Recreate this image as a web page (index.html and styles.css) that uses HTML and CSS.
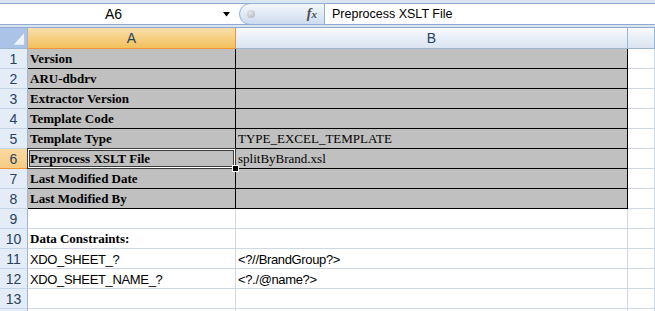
FILE: index.html
```html
<!DOCTYPE html>
<html lang="en">
<head>
  <meta charset="UTF-8">
  <meta name="viewport" content="width=device-width, initial-scale=1.0">
  <title>Template Sheet</title>

  <link rel="stylesheet" href="styles.css">
</head>
<body>
  <div class="formula-bar">
    <div class="formula-row">
      <div class="name-box">
        <span class="cell-ref">A6</span>
        <svg class="drop" width="8" height="5" viewBox="0 0 8 5"><path d="M0 0h7L3.5 4.5z" fill="#000"/></svg>
      </div>
      <div class="fx-pill">
        <span class="knob"></span>
        <span class="fx">f<sub>x</sub></span>
      </div>
      <div class="formula-input">Preprocess XSLT File</div>
    </div>
  </div>

  <div class="sheet">
    <!-- column headers -->
    <div class="corner">
      <svg width="28" height="21" viewBox="0 0 28 21"><path d="M14 17H25V5z" fill="#eef3fa"/></svg>
    </div>
    <div class="col-head active">A</div>
    <div class="col-head">B</div>
    <div class="col-head"></div>

    <!-- template header block -->
    <div class="row-head">1</div>
    <div class="cell boxed label">Version</div>
    <div class="cell boxed"></div>
    <div class="cell"></div>

    <div class="row-head">2</div>
    <div class="cell boxed label">ARU-dbdrv</div>
    <div class="cell boxed"></div>
    <div class="cell"></div>

    <div class="row-head">3</div>
    <div class="cell boxed label">Extractor Version</div>
    <div class="cell boxed"></div>
    <div class="cell"></div>

    <div class="row-head">4</div>
    <div class="cell boxed label">Template Code</div>
    <div class="cell boxed"></div>
    <div class="cell"></div>

    <div class="row-head">5</div>
    <div class="cell boxed label">Template Type</div>
    <div class="cell boxed value">TYPE_EXCEL_TEMPLATE</div>
    <div class="cell"></div>

    <div class="row-head active">6</div>
    <div class="cell boxed label current">
      Preprocess XSLT File
      <div class="selection"><span class="fill-handle"></span></div>
    </div>
    <div class="cell boxed value">splitByBrand.xsl</div>
    <div class="cell"></div>

    <div class="row-head">7</div>
    <div class="cell boxed label">Last Modified Date</div>
    <div class="cell boxed"></div>
    <div class="cell"></div>

    <div class="row-head">8</div>
    <div class="cell boxed label">Last Modified By</div>
    <div class="cell boxed"></div>
    <div class="cell"></div>

    <div class="row-head">9</div>
    <div class="cell"></div>
    <div class="cell"></div>
    <div class="cell"></div>

    <!-- constraints -->
    <div class="row-head">10</div>
    <div class="cell label">Data Constraints:</div>
    <div class="cell"></div>
    <div class="cell"></div>

    <div class="row-head">11</div>
    <div class="cell plain">XDO_SHEET_?</div>
    <div class="cell plain">&lt;?//BrandGroup?&gt;</div>
    <div class="cell"></div>

    <div class="row-head">12</div>
    <div class="cell plain">XDO_SHEET_NAME_?</div>
    <div class="cell plain">&lt;?./@name?&gt;</div>
    <div class="cell"></div>

    <div class="row-head">13</div>
    <div class="cell"></div>
    <div class="cell"></div>
    <div class="cell"></div>

    <div class="row-head">14</div>
    <div class="cell"></div>
    <div class="cell"></div>
    <div class="cell"></div>
  </div>
</body>
</html>
```

FILE: styles.css
```css
html,
body {
  height: 100%;
}

body {
  margin: 0;
  font-family: "Liberation Sans", Arial, sans-serif;
  background: #fff;
  overflow: hidden;
}

/* formula bar */
.formula-bar {
  height: 28px;
  box-sizing: border-box;
  padding: 3px 0 2px;
  background: #dbe5f2;
  border-bottom: 1px solid #8eaad0;
}

.formula-row {
  display: flex;
  height: 22px;
  box-sizing: border-box;
  background: #fff;
  border-top: 1px solid #8eaad0;
  border-bottom: 1px solid #8eaad0;
}

.name-box {
  width: 239px;
  display: flex;
  align-items: center;
}

.cell-ref {
  flex: 1;
  text-align: center;
  font-size: 14px;
  padding-left: 8px;
}

.drop {
  margin: 1px 8px 0 4px;
}

.fx-pill {
  width: 86px;
  box-sizing: border-box;
  margin: -1px 0;
  display: flex;
  align-items: center;
  justify-content: space-between;
  padding: 0 7px 0 7px;
  border: 1px solid #94afd4;
  border-radius: 11px 0 0 11px;
  background: linear-gradient(#f4f7fc, #dfe8f5 55%, #cddbee);
}

.knob {
  width: 8px;
  height: 8px;
  border-radius: 50%;
  background: radial-gradient(circle at 40% 35%, #e6e9ee, #a8adb5);
}

.fx {
  font-family: "Liberation Serif", serif;
  font-style: italic;
  font-weight: bold;
  font-size: 14px;
  color: #4a4d52;
}

.fx sub {
  font-size: 11px;
  vertical-align: 0;
}

.formula-input {
  flex: 1;
  padding-left: 7px;
  font-size: 12.5px;
  line-height: 20px;
  color: #000;
}

/* sheet grid */
.sheet {
  display: grid;
  grid-template-columns: 28px 208px 392px 1fr;
  grid-template-rows: 21px repeat(14, 20px);
}

.corner {
  background: #aac3e6;
  border-right: 1px solid #9eb6ce;
  border-bottom: 1px solid #9eb6ce;
  box-sizing: border-box;
  display: flex;
}

.col-head {
  box-sizing: border-box;
  border-right: 1px solid #9eb6ce;
  border-bottom: 1px solid #9eb6ce;
  background: linear-gradient(#f8fafd, #eaf0f8 45%, #dae4f1);
  color: #27415f;
  font-size: 14px;
  line-height: 21px;
  text-align: center;
}

.col-head.active {
  background: linear-gradient(#fae0ae, #f6cf82 50%, #f2c05e);
  border-right-color: #f29436;
  border-bottom-color: #f29436;
}

.row-head {
  box-sizing: border-box;
  background: #e4ecf7;
  border-right: 1px solid #9eb6ce;
  border-bottom: 1px solid #c5d3e6;
  color: #27415f;
  font-size: 14px;
  line-height: 21px;
  text-align: center;
}

.row-head.active {
  background: linear-gradient(#f9d9a0, #f6cc84);
  border-right-color: #f29436;
  border-bottom-color: #f29436;
}

.cell {
  box-sizing: border-box;
  border-right: 1px solid #d0d7e5;
  border-bottom: 1px solid #d0d7e5;
  padding: 0 2px;
  line-height: 20px;
  white-space: nowrap;
  overflow: hidden;
}

.cell.boxed {
  background: #c0c0c0;
  border-right-color: #000;
  border-bottom-color: #000;
}

.cell.current {
  position: relative;
  overflow: visible;
}

.label {
  font-family: "Liberation Serif", "Times New Roman", serif;
  font-weight: bold;
  font-size: 13px;
}

.value {
  font-family: "Liberation Serif", "Times New Roman", serif;
  font-size: 13px;
}

.plain {
  font-size: 13px;
  letter-spacing: -0.35px;
  line-height: 21px;
}

.selection {
  position: absolute;
  top: -1px;
  left: -1px;
  right: -1px;
  bottom: -1px;
  border: 1px solid #3c3c3c;
  box-shadow: inset 0 0 0 1px #fff, inset 0 0 0 2px #3c3c3c;
  pointer-events: none;
}

.fill-handle {
  position: absolute;
  right: -4px;
  bottom: -4px;
  width: 5px;
  height: 5px;
  background: #000;
  border: 1px solid #fff;
}
```
